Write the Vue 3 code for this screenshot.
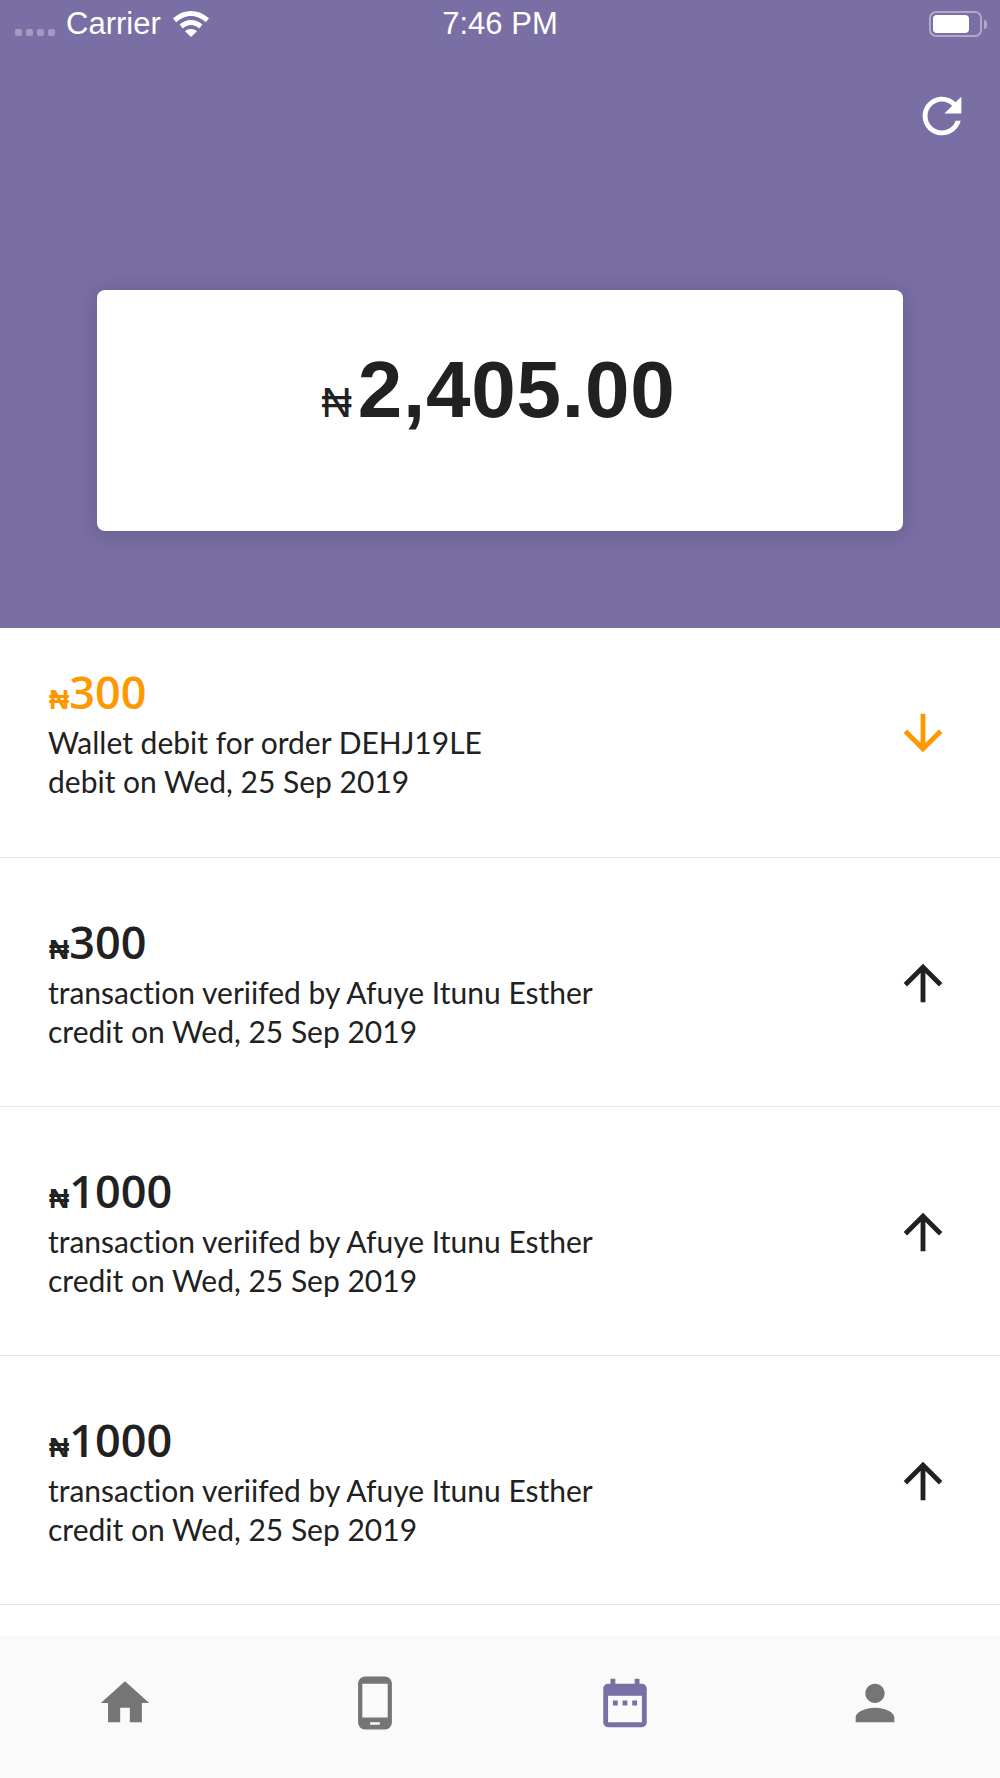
<script setup>
const rows = [
  { amount: '300', title: 'Wallet debit for order DEHJ19LE', meta: 'debit on Wed, 25 Sep 2019', debit: true },
  { amount: '300', title: 'transaction veriifed by Afuye Itunu Esther', meta: 'credit on Wed, 25 Sep 2019', debit: false },
  { amount: '1000', title: 'transaction veriifed by Afuye Itunu Esther', meta: 'credit on Wed, 25 Sep 2019', debit: false },
  { amount: '1000', title: 'transaction veriifed by Afuye Itunu Esther', meta: 'credit on Wed, 25 Sep 2019', debit: false },
]
const arrowUp = 'M4 12l1.41 1.41L11 7.83V20h2V7.83l5.58 5.59L20 12l-8-8-8 8z'
const arrowDown = 'M20 12l-1.41-1.41L13 16.17V4h-2v12.17l-5.58-5.59L4 12l8 8 8-8z'
const tabs = [
  { name: 'home', d: 'M10 20v-6h4v6h5v-8h3L12 3 2 12h3v8z' },
  { name: 'phone', d: 'M16 1H8C6.34 1 5 2.34 5 4v16c0 1.66 1.34 3 3 3h8c1.66 0 3-1.34 3-3V4c0-1.66-1.34-3-3-3zm-2 20h-4v-1h4v1zm3.25-3H6.75V4h10.5v14z' },
  { name: 'date', active: true, d: 'M9 11H7v2h2v-2zm4 0h-2v2h2v-2zm4 0h-2v2h2v-2zm2-7h-1V2h-2v2H8V2H6v2H5c-1.11 0-1.99.9-1.99 2L3 20c0 1.1.89 2 2 2h14c1.1 0 2-.9 2-2V6c0-1.1-.9-2-2-2zm0 16H5V9h14v11z' },
  { name: 'person', d: 'M12 12c2.21 0 4-1.79 4-4s-1.79-4-4-4-4 1.79-4 4 1.79 4 4 4zm0 2c-2.67 0-8 1.34-8 4v2h16v-2c0-2.66-5.33-4-8-4z' },
]
</script>

<template>
  <div class="app">
    <header class="hero">
      <div class="status">
        <div class="status-left">
          <span class="dots"><i></i><i></i><i></i><i></i></span>
          <span class="carrier">Carrier</span>
          <svg class="wifi" viewBox="0 0 36 26" width="36" height="26">
            <path fill="#fff" d="M18 0C11.500 0 5.500 2.500 0 7.300l3.200 3.900C7.200 7.600 12.600 5 18 5s10.800 2.600 14.800 6.200L36 7.300C30.500 2.500 24.500 0 18 0z"/>
            <path fill="#fff" d="M18 9c-4.200 0-8 1.600-11.400 4.600l3.200 3.900c2.300-2 5.200-3.500 8.200-3.500s5.900 1.500 8.200 3.500l3.200-3.900C26 10.600 22.200 9 18 9z"/>
            <path fill="#fff" d="M18 18c-2.200 0-4.300.8-6 2.300L18 26l6-5.700C22.300 18.800 20.200 18 18 18z"/>
          </svg>
        </div>
        <span class="clock">7:46 PM</span>
        <div class="status-right">
          <span class="battery"><span class="battery-fill"></span></span>
          <span class="battery-cap"></span>
        </div>
      </div>
      <div class="refresh-row">
        <svg class="icon" viewBox="0 0 24 24" width="58" height="58">
          <path fill="#fff" d="M17.65 6.35C16.2 4.9 14.21 4 12 4c-4.420 0-7.990 3.580-7.990 8s3.570 8 7.990 8c3.730 0 6.840-2.550 7.730-6h-2.080c-.82 2.330-3.040 4-5.650 4-3.310 0-6-2.690-6-6s2.690-6 6-6c1.660 0 3.140.69 4.220 1.780L13 11h7V4l-2.350 2.350z"/>
        </svg>
      </div>
      <div class="card">
        <div class="balance"><span class="naira">₦</span>2,405.00</div>
      </div>
    </header>

    <main class="list">
      <article v-for="(row, i) in rows" :key="i" class="row" :class="{ first: i === 0 }">
        <div class="row-text">
          <div class="amount" :class="{ orange: row.debit }"><span class="naira-small">₦</span>{{ row.amount }}</div>
          <div class="line">{{ row.title }}</div>
          <div class="line">{{ row.meta }}</div>
        </div>
        <svg class="arrow" viewBox="0 0 24 24" width="58" height="58">
          <path :fill="row.debit ? '#ff9800' : '#212121'" :d="row.debit ? arrowDown : arrowUp"/>
        </svg>
      </article>
    </main>

    <nav class="tabs">
      <div v-for="t in tabs" :key="t.name" class="tab">
        <svg viewBox="0 0 24 24" width="58" height="58">
          <path :fill="t.active ? '#7a6fa5' : '#757575'" :d="t.d"/>
        </svg>
      </div>
    </nav>
  </div>
</template>

<style>
html, body { margin: 0; background: #fff; }
</style>

<style scoped>
.app {
  width: 1000px;
  height: 1778px;
  display: flex;
  flex-direction: column;
  overflow: hidden;
  background: #fff;
}
.hero {
  height: 628px;
  flex: none;
  background: #7a6fa5;
  display: flex;
  flex-direction: column;
}
.status {
  height: 48px;
  display: grid;
  grid-template-columns: 1fr auto 1fr;
  align-items: center;
  color: #fff;
  font-family: "Liberation Sans", sans-serif;
  font-size: 31px;
}
.status-left {
  display: flex;
  align-items: center;
  padding-left: 15px;
}
.dots {
  display: flex;
  gap: 4px;
  margin-top: 17px;
  margin-right: 11px;
}
.dots i {
  width: 7px;
  height: 7px;
  border-radius: 2px;
  background: rgba(255, 255, 255, .3);
}
.carrier { margin-right: 12px; }
.wifi { display: block; }
.clock { text-align: center; }
.status-right {
  display: flex;
  align-items: center;
  justify-content: flex-end;
  padding-right: 13px;
}
.battery {
  box-sizing: border-box;
  width: 53px;
  height: 26px;
  border: 2px solid rgba(255, 255, 255, .4);
  border-radius: 7px;
  padding: 2px;
  display: block;
}
.battery-fill {
  display: block;
  width: 36px;
  height: 18px;
  background: #fff;
  border-radius: 4px;
}
.battery-cap {
  width: 3px;
  height: 9px;
  margin-left: 2px;
  background: rgba(255, 255, 255, .4);
  border-radius: 0 4px 4px 0;
}
.refresh-row {
  display: flex;
  justify-content: flex-end;
  padding: 39px 29px 0 0;
}
.icon, .arrow { display: block; flex: none; }
.card {
  box-sizing: border-box;
  width: 806px;
  height: 241px;
  margin: 145px 0 0 97px;
  background: #fff;
  border-radius: 8px;
  box-shadow: 0 3px 24px rgba(0, 0, 0, .18);
  padding: 54px 3px 0 0;
  text-align: center;
  color: #212121;
  font-family: "Liberation Sans", sans-serif;
}
.balance {
  font-size: 80px;
  font-weight: 700;
  line-height: 92px;
  letter-spacing: .8px;
}
.naira {
  font-size: 42px;
  font-weight: 400;
  margin-right: 5px;
}
.list {
  flex: 1;
  overflow: hidden;
}
.row {
  box-sizing: border-box;
  height: 249px;
  padding: 59px 48px 0 48px;
  border-bottom: 1px solid #e8e8e8;
  display: flex;
  justify-content: space-between;
  align-items: flex-start;
}
.row.first {
  height: 230px;
  padding-top: 39px;
}
.row-text { color: #212121; }
.amount {
  font-family: "Open Sans", sans-serif;
  font-size: 45px;
  font-weight: 600;
  line-height: 50px;
  height: 56px;
}
.amount.orange { color: #ff9800; }
.naira-small {
  font-family: "Liberation Sans", sans-serif;
  font-weight: 700;
  font-size: 28px;
  margin-left: 1px;
}
.line {
  font-family: Lato, sans-serif;
  font-variant-ligatures: none;
  font-size: 30px;
  line-height: 39px;
}
.arrow { margin-top: 37px; }
.tabs {
  flex: none;
  height: 142px;
  background: #fafafa;
  display: grid;
  grid-template-columns: repeat(4, 1fr);
  padding-top: 38px;
  box-sizing: border-box;
}
.tab {
  display: flex;
  justify-content: center;
}
.tab svg { display: block; }
</style>
